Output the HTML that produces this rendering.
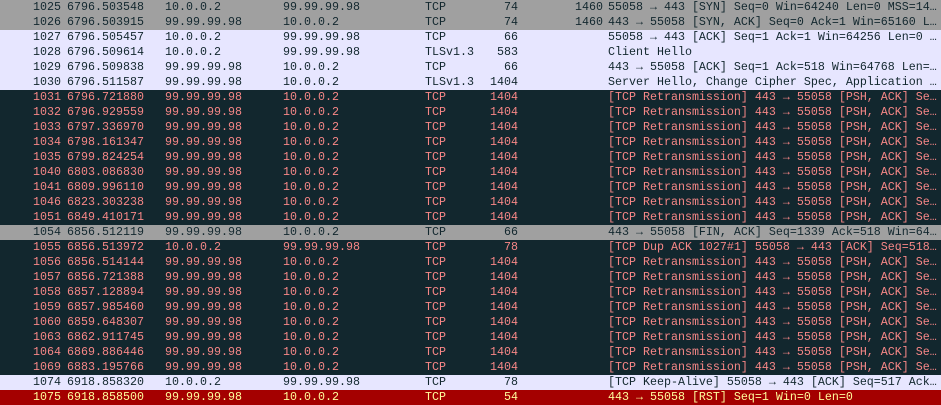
<!DOCTYPE html><html><head><style>
body{margin:0;width:941px;height:405px;overflow:hidden;background:#fff;font-family:"Liberation Mono",monospace;font-size:11.66px}
.r{position:relative;height:15px;line-height:15px;white-space:pre;overflow:hidden}
.r span{position:absolute;top:0}
.g{background:#a0a0a0;color:#12272e}
.l{background:#e7e6ff;color:#12272e}
.d{background:#12272e;color:#f78787}
.x{background:#a40000;color:#fffc9c}
.no{right:880px;text-align:right}
.t{left:67px}.s{left:165px}.ds{left:283px}.p{left:425px}
.len{right:423px;text-align:right}
.w{right:338px;text-align:right}
.i{left:608px}
</style></head><body>
<div class="r g"><span class="no">1025</span><span class="t">6796.503548</span><span class="s">10.0.0.2</span><span class="ds">99.99.99.98</span><span class="p">TCP</span><span class="len">74</span><span class="w">1460</span><span class="i">55058 → 443 [SYN] Seq=0 Win=64240 Len=0 MSS=14…</span></div>
<div class="r g"><span class="no">1026</span><span class="t">6796.503915</span><span class="s">99.99.99.98</span><span class="ds">10.0.0.2</span><span class="p">TCP</span><span class="len">74</span><span class="w">1460</span><span class="i">443 → 55058 [SYN, ACK] Seq=0 Ack=1 Win=65160 L…</span></div>
<div class="r l"><span class="no">1027</span><span class="t">6796.505457</span><span class="s">10.0.0.2</span><span class="ds">99.99.99.98</span><span class="p">TCP</span><span class="len">66</span><span class="i">55058 → 443 [ACK] Seq=1 Ack=1 Win=64256 Len=0 …</span></div>
<div class="r l"><span class="no">1028</span><span class="t">6796.509614</span><span class="s">10.0.0.2</span><span class="ds">99.99.99.98</span><span class="p">TLSv1.3</span><span class="len">583</span><span class="i">Client Hello</span></div>
<div class="r l"><span class="no">1029</span><span class="t">6796.509838</span><span class="s">99.99.99.98</span><span class="ds">10.0.0.2</span><span class="p">TCP</span><span class="len">66</span><span class="i">443 → 55058 [ACK] Seq=1 Ack=518 Win=64768 Len=…</span></div>
<div class="r l"><span class="no">1030</span><span class="t">6796.511587</span><span class="s">99.99.99.98</span><span class="ds">10.0.0.2</span><span class="p">TLSv1.3</span><span class="len">1404</span><span class="i">Server Hello, Change Cipher Spec, Application …</span></div>
<div class="r d"><span class="no">1031</span><span class="t">6796.721880</span><span class="s">99.99.99.98</span><span class="ds">10.0.0.2</span><span class="p">TCP</span><span class="len">1404</span><span class="i">[TCP Retransmission] 443 → 55058 [PSH, ACK] Se…</span></div>
<div class="r d"><span class="no">1032</span><span class="t">6796.929559</span><span class="s">99.99.99.98</span><span class="ds">10.0.0.2</span><span class="p">TCP</span><span class="len">1404</span><span class="i">[TCP Retransmission] 443 → 55058 [PSH, ACK] Se…</span></div>
<div class="r d"><span class="no">1033</span><span class="t">6797.336970</span><span class="s">99.99.99.98</span><span class="ds">10.0.0.2</span><span class="p">TCP</span><span class="len">1404</span><span class="i">[TCP Retransmission] 443 → 55058 [PSH, ACK] Se…</span></div>
<div class="r d"><span class="no">1034</span><span class="t">6798.161347</span><span class="s">99.99.99.98</span><span class="ds">10.0.0.2</span><span class="p">TCP</span><span class="len">1404</span><span class="i">[TCP Retransmission] 443 → 55058 [PSH, ACK] Se…</span></div>
<div class="r d"><span class="no">1035</span><span class="t">6799.824254</span><span class="s">99.99.99.98</span><span class="ds">10.0.0.2</span><span class="p">TCP</span><span class="len">1404</span><span class="i">[TCP Retransmission] 443 → 55058 [PSH, ACK] Se…</span></div>
<div class="r d"><span class="no">1040</span><span class="t">6803.086830</span><span class="s">99.99.99.98</span><span class="ds">10.0.0.2</span><span class="p">TCP</span><span class="len">1404</span><span class="i">[TCP Retransmission] 443 → 55058 [PSH, ACK] Se…</span></div>
<div class="r d"><span class="no">1041</span><span class="t">6809.996110</span><span class="s">99.99.99.98</span><span class="ds">10.0.0.2</span><span class="p">TCP</span><span class="len">1404</span><span class="i">[TCP Retransmission] 443 → 55058 [PSH, ACK] Se…</span></div>
<div class="r d"><span class="no">1046</span><span class="t">6823.303238</span><span class="s">99.99.99.98</span><span class="ds">10.0.0.2</span><span class="p">TCP</span><span class="len">1404</span><span class="i">[TCP Retransmission] 443 → 55058 [PSH, ACK] Se…</span></div>
<div class="r d"><span class="no">1051</span><span class="t">6849.410171</span><span class="s">99.99.99.98</span><span class="ds">10.0.0.2</span><span class="p">TCP</span><span class="len">1404</span><span class="i">[TCP Retransmission] 443 → 55058 [PSH, ACK] Se…</span></div>
<div class="r g"><span class="no">1054</span><span class="t">6856.512119</span><span class="s">99.99.99.98</span><span class="ds">10.0.0.2</span><span class="p">TCP</span><span class="len">66</span><span class="i">443 → 55058 [FIN, ACK] Seq=1339 Ack=518 Win=64…</span></div>
<div class="r d"><span class="no">1055</span><span class="t">6856.513972</span><span class="s">10.0.0.2</span><span class="ds">99.99.99.98</span><span class="p">TCP</span><span class="len">78</span><span class="i">[TCP Dup ACK 1027#1] 55058 → 443 [ACK] Seq=518…</span></div>
<div class="r d"><span class="no">1056</span><span class="t">6856.514144</span><span class="s">99.99.99.98</span><span class="ds">10.0.0.2</span><span class="p">TCP</span><span class="len">1404</span><span class="i">[TCP Retransmission] 443 → 55058 [PSH, ACK] Se…</span></div>
<div class="r d"><span class="no">1057</span><span class="t">6856.721388</span><span class="s">99.99.99.98</span><span class="ds">10.0.0.2</span><span class="p">TCP</span><span class="len">1404</span><span class="i">[TCP Retransmission] 443 → 55058 [PSH, ACK] Se…</span></div>
<div class="r d"><span class="no">1058</span><span class="t">6857.128894</span><span class="s">99.99.99.98</span><span class="ds">10.0.0.2</span><span class="p">TCP</span><span class="len">1404</span><span class="i">[TCP Retransmission] 443 → 55058 [PSH, ACK] Se…</span></div>
<div class="r d"><span class="no">1059</span><span class="t">6857.985460</span><span class="s">99.99.99.98</span><span class="ds">10.0.0.2</span><span class="p">TCP</span><span class="len">1404</span><span class="i">[TCP Retransmission] 443 → 55058 [PSH, ACK] Se…</span></div>
<div class="r d"><span class="no">1060</span><span class="t">6859.648307</span><span class="s">99.99.99.98</span><span class="ds">10.0.0.2</span><span class="p">TCP</span><span class="len">1404</span><span class="i">[TCP Retransmission] 443 → 55058 [PSH, ACK] Se…</span></div>
<div class="r d"><span class="no">1063</span><span class="t">6862.911745</span><span class="s">99.99.99.98</span><span class="ds">10.0.0.2</span><span class="p">TCP</span><span class="len">1404</span><span class="i">[TCP Retransmission] 443 → 55058 [PSH, ACK] Se…</span></div>
<div class="r d"><span class="no">1064</span><span class="t">6869.886446</span><span class="s">99.99.99.98</span><span class="ds">10.0.0.2</span><span class="p">TCP</span><span class="len">1404</span><span class="i">[TCP Retransmission] 443 → 55058 [PSH, ACK] Se…</span></div>
<div class="r d"><span class="no">1069</span><span class="t">6883.195766</span><span class="s">99.99.99.98</span><span class="ds">10.0.0.2</span><span class="p">TCP</span><span class="len">1404</span><span class="i">[TCP Retransmission] 443 → 55058 [PSH, ACK] Se…</span></div>
<div class="r l"><span class="no">1074</span><span class="t">6918.858320</span><span class="s">10.0.0.2</span><span class="ds">99.99.99.98</span><span class="p">TCP</span><span class="len">78</span><span class="i">[TCP Keep-Alive] 55058 → 443 [ACK] Seq=517 Ack…</span></div>
<div class="r x"><span class="no">1075</span><span class="t">6918.858500</span><span class="s">99.99.99.98</span><span class="ds">10.0.0.2</span><span class="p">TCP</span><span class="len">54</span><span class="i">443 → 55058 [RST] Seq=1 Win=0 Len=0</span></div>
</body></html>
